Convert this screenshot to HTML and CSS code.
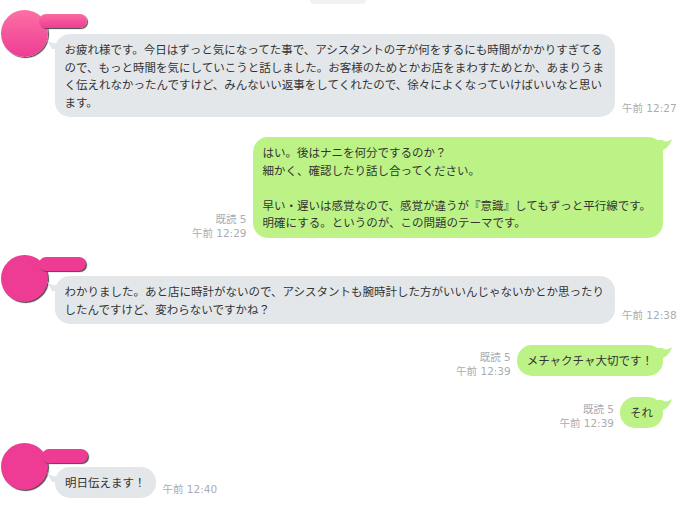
FILE: index.html
```html
<!DOCTYPE html>
<html lang="ja">

<head>
    <meta charset="UTF-8">
    <meta name="viewport" content="width=device-width, initial-scale=1.0">
    <title>Chat</title>
    <link rel="stylesheet" href="styles.css">
</head>

<body>
    <div class="date-chip"></div>

    <div class="chat">
        <div class="msg msg-left">
            <div class="avatar avatar-gradient"><span class="avatar-name"></span></div>
            <svg class="tail-left" width="12" height="10" viewBox="0 0 12 10"><path d="M0 0C2 3 6 5 12 4V10H5C3 6 1 3 0 0Z" /></svg>
            <div class="bubble bubble-wide">お疲れ様です。今日はずっと気になってた事で、アシスタントの子が何をするにも時間がかかりすぎてるので、もっと時間を気にしていこうと話しました。お客様のためとかお店をまわすためとか、あまりうまく伝えれなかったんですけど、みんないい返事をしてくれたので、徐々によくなっていけばいいなと思います。</div>
            <div class="meta">午前 12:27</div>
        </div>

        <div class="msg msg-right">
            <div class="meta">既読 5<br>午前 12:29</div>
            <div class="bubble bubble-long">はい。後はナニを何分でするのか？<br>細かく、確認したり話し合ってください。<br><br>早い・遅いは感覚なので、感覚が違うが『意識』してもずっと平行線です。<br>明確にする。というのが、この問題のテーマです。</div>
            <svg class="tail-right" width="18" height="14" viewBox="0 0 18 14"><path d="M0 2H8C11 4 14 4 18 1C16 8 11 12 5 14H0Z" /></svg>
        </div>

        <div class="msg msg-left gap-large">
            <div class="avatar avatar-low"><span class="avatar-name avatar-name-low"></span></div>
            <svg class="tail-left" width="12" height="10" viewBox="0 0 12 10"><path d="M0 0C2 3 6 5 12 4V10H5C3 6 1 3 0 0Z" /></svg>
            <div class="bubble bubble-wide">わかりました。あと店に時計がないので、アシスタントも腕時計した方がいいんじゃないかとか思ったりしたんですけど、変わらないですかね？</div>
            <div class="meta">午前 12:38</div>
        </div>

        <div class="msg msg-right gap-small">
            <div class="meta">既読 5<br>午前 12:39</div>
            <div class="bubble">メチャクチャ大切です！</div>
            <svg class="tail-right" width="18" height="14" viewBox="0 0 18 14"><path d="M0 2H8C11 4 14 4 18 1C16 8 11 12 5 14H0Z" /></svg>
        </div>

        <div class="msg msg-right gap-small">
            <div class="meta">既読 5<br>午前 12:39</div>
            <div class="bubble">それ</div>
            <svg class="tail-right" width="18" height="14" viewBox="0 0 18 14"><path d="M0 2H8C11 4 14 4 18 1C16 8 11 12 5 14H0Z" /></svg>
        </div>

        <div class="msg msg-left gap-large">
            <div class="avatar"><span class="avatar-name avatar-name-shift"></span></div>
            <svg class="tail-left" width="12" height="10" viewBox="0 0 12 10"><path d="M0 0C2 3 6 5 12 4V10H5C3 6 1 3 0 0Z" /></svg>
            <div class="bubble">明日伝えます！</div>
            <div class="meta">午前 12:40</div>
        </div>
    </div>
</body>

</html>
```

FILE: styles.css
```css
body {
    margin: 0;
    height: 511px;
    overflow: hidden;
    background-color: #fff;
    font-family: "Noto Sans CJK JP", sans-serif;
    color: #333;
}

.date-chip {
    width: 56px;
    height: 4px;
    margin-left: 310px;
    margin-bottom: 30px;
    background-color: #f0f1f3;
    border-radius: 0 0 8px 8px;
}

.chat {
    display: flex;
    flex-direction: column;
    gap: 20px;
}

.msg {
    position: relative;
    display: flex;
    align-items: flex-end;
    gap: 7px;
}

.msg-left {
    padding-left: 55px;
}

.msg-right {
    justify-content: flex-end;
    padding-right: 17px;
    gap: 6px;
}

.gap-large {
    margin-top: 18.5px;
}

.gap-small {
    margin-top: 1px;
}

.bubble {
    min-height: 18px;
    padding: 7px 10px 6px;
    border-radius: 15px;
    font-size: 11.5px;
    line-height: 17.5px;
    white-space: nowrap;
}

.bubble-wide {
    box-sizing: border-box;
    width: 560px;
    padding-left: 9.5px;
    padding-right: 8px;
    white-space: normal;
}

.bubble-long {
    padding-right: 12px;
}

.msg-left .bubble {
    background-color: #e4e7ea;
}

.msg-right .bubble {
    background-color: #bdf386;
}

.meta {
    font-family: "DejaVu Sans", "Noto Sans CJK JP", sans-serif;
    font-size: 10.5px;
    line-height: 14px;
    color: #a9adb3;
    text-align: right;
    white-space: nowrap;
}

.msg-left .meta {
    margin-bottom: 2px;
}

.msg-right .meta {
    margin-bottom: -2px;
}

.avatar {
    position: absolute;
    left: 1px;
    top: -24px;
    width: 47px;
    height: 47px;
    border-radius: 50%;
    background-color: #ee3c94;
    box-shadow: 1px 1px 1px #444;
}

.avatar-gradient {
    background: linear-gradient(#fc70a5, #ee3c94);
}

.avatar-low {
    top: -21px;
}

.avatar-name {
    position: absolute;
    left: 38px;
    top: 4px;
    width: 48px;
    height: 14px;
    border-radius: 7px;
    background-color: #ee3c94;
    box-shadow: 1px 1px 1px #444;
}

.avatar-gradient .avatar-name {
    background: linear-gradient(#fb6aa3, #ee3c94);
}

.avatar-name-low {
    top: 2px;
    width: 47px;
}

.avatar-name-shift {
    left: 41px;
    top: 6px;
    width: 46px;
}

.tail-left {
    position: absolute;
    left: 47px;
    top: 5px;
    fill: #e4e7ea;
}

.tail-right {
    position: absolute;
    right: 8px;
    top: 1px;
    fill: #bdf386;
}
```
